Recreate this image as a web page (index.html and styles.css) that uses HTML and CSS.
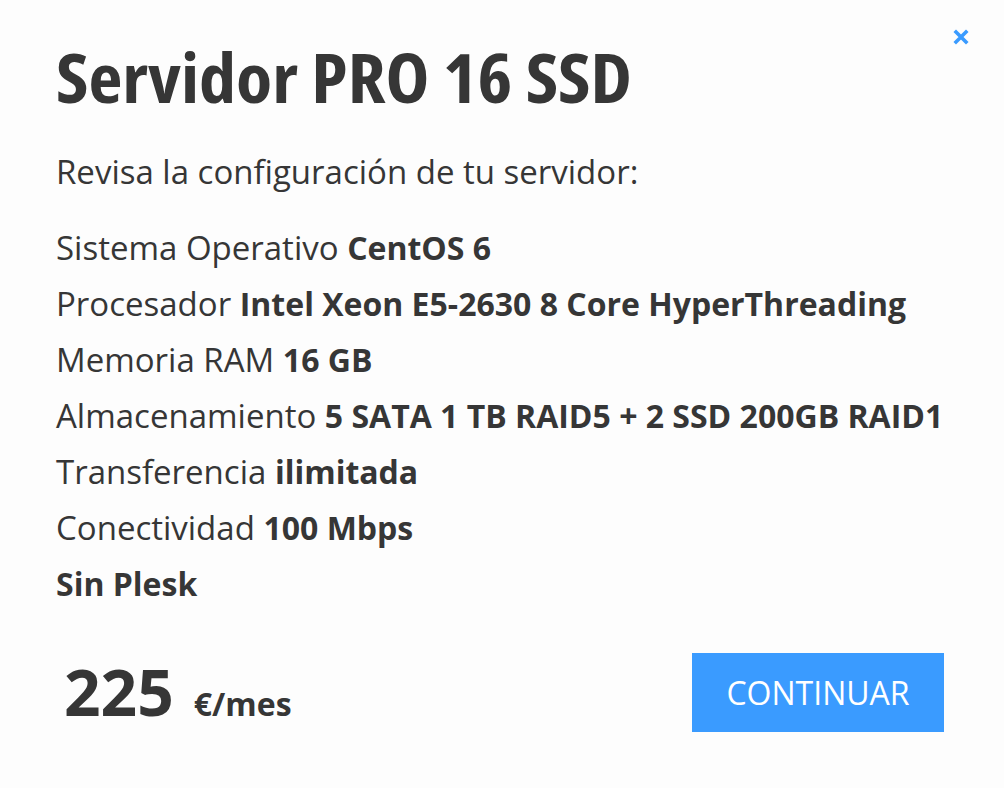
FILE: index.html
```html
<!DOCTYPE html>
<html lang="es">
<head>
<meta charset="utf-8">
<title>Servidor PRO 16 SSD</title>
<link rel="stylesheet" href="styles.css">
</head>
<body>
<div class="modal">
  <button class="close" aria-label="Cerrar">
    <svg width="16" height="16" viewBox="0 0 16 16"><path d="M3 3L13 13M13 3L3 13" stroke="#3a9bff" stroke-width="3.6" stroke-linecap="square"/></svg>
  </button>
  <h1 class="title">Servidor PRO 16 SSD</h1>
  <p class="intro">Revisa la configuración de tu servidor:</p>
  <ul class="specs">
    <li>Sistema Operativo <b>CentOS 6</b></li>
    <li>Procesador <b>Intel Xeon E5-2630 8 Core HyperThreading</b></li>
    <li>Memoria RAM <b>16 GB</b></li>
    <li>Almacenamiento <b>5 SATA 1 TB RAID5 + 2 SSD 200GB RAID1</b></li>
    <li>Transferencia <b>ilimitada</b></li>
    <li>Conectividad <b>100 Mbps</b></li>
    <li><b>Sin Plesk</b></li>
  </ul>
  <div class="footer">
    <div class="price"><span class="amount">225</span><span class="unit">€/mes</span></div>
    <button class="cta">CONTINUAR</button>
  </div>
</div>
</body>
</html>
```

FILE: styles.css
```css
html, body {
  margin: 0;
  padding: 0;
  background: #fdfdfd;
}
body {
  font-family: "Open Sans", "Liberation Sans", sans-serif;
  color: #363636;
  width: 1004px;
  height: 788px;
  overflow: hidden;
}
.modal {
  position: relative;
  padding: 37px 60px 0 56px;
  display: flex;
  flex-direction: column;
}
.close {
  position: absolute;
  top: 29px;
  right: 35px;
  background: none;
  border: 0;
  padding: 0;
  width: 16px;
  height: 16px;
  cursor: pointer;
}
.close svg { display: block; }
.title {
  margin: 0;
  font-size: 68px;
  font-weight: 700;
  font-stretch: 75%;
  line-height: 80px;
  letter-spacing: 0;
  color: #363636;
  transform: scaleX(1.09);
  transform-origin: left center;
}
.intro {
  margin: 27px 0 0;
  font-size: 33px;
  line-height: 56px;
}
.specs {
  list-style: none;
  margin: 20px 0 0;
  padding: 0;
  font-size: 33px;
  line-height: 56px;
}
.specs b {
  font-weight: 700;
  font-size: 32px;
}
.footer {
  margin-top: 40px;
  display: flex;
  justify-content: space-between;
  align-items: center;
}
.price {
  display: flex;
  align-items: baseline;
  padding-left: 8px;
}
.amount {
  font-size: 64px;
  font-weight: 700;
  line-height: 80px;
}
.unit {
  margin-left: 20px;
  font-size: 32px;
  font-weight: 700;
}
.cta {
  width: 252px;
  height: 79px;
  background: #3a9bff;
  border: 0;
  color: #fff;
  font-family: "Open Sans", "Liberation Sans", sans-serif;
  font-size: 32px;
  font-weight: 400;
  cursor: pointer;
}
```
